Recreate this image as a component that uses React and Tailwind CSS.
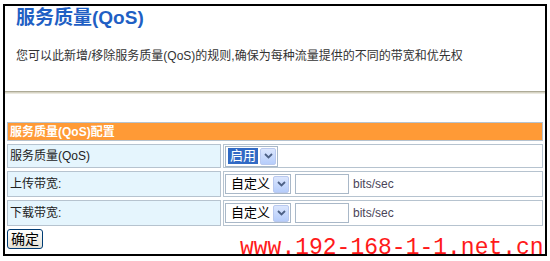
import React from "react";

const Chevron = () => (
  <svg width="9" height="6" viewBox="0 0 9 6">
    <path d="M1 1 L4.5 4.5 L8 1" fill="none" stroke="#4d6185" strokeWidth="1.8" />
  </svg>
);

const Arrow = () => (
  <span className="flex h-[17px] w-[16px] items-center justify-center rounded-[2px] border border-[#b9c9ef] bg-gradient-to-b from-[#dbe6fd] to-[#b6cdfb]">
    <Chevron />
  </span>
);

const Cell = ({ left, children }) => (
  <div className="grid h-full grid-cols-[214px_1fr] gap-x-[2px]">
    <div className="flex items-center border border-[#b6c3cf] bg-[#e5f5fd] pl-[2px] text-[12px] text-[#222]">
      {left}
    </div>
    <div className="flex items-center border border-[#b6c3cf] bg-white pl-[1px]">
      {children}
    </div>
  </div>
);

const BandwidthRow = ({ label }) => (
  <div className="h-[26px]">
    <Cell left={label}>
      <div className="flex h-[20px] w-[66px] items-center border border-[#a9b8c8] bg-white">
        <span className="ml-[5px] text-[13px] leading-[16px] text-black">自定义</span>
        <span className="ml-auto mr-[1px]">
          <Arrow />
        </span>
      </div>
      <div className="ml-[4px] h-[20px] w-[54px] border border-[#a9b8c8] bg-white" />
      <span className="ml-[4px] text-[12px] text-[#4a4458]">bits/sec</span>
    </Cell>
  </div>
);

export default function App() {
  return (
    <div className="relative h-[261px] w-[550px] overflow-hidden bg-white pl-[3px] pt-[4px] font-['Liberation_Sans','Noto_Sans_CJK_SC',sans-serif]">
      <div className="h-[252px] w-[544px] border-2 border-black">
        <h1 className="pl-[11px] text-[19px] font-bold leading-[24px] text-[#1f5fc4]">服务质量(QoS)</h1>
        <p className="mt-[18px] pl-[11px] text-[12px] leading-[16px] text-[#333]">
          您可以此新增/移除服务质量(QoS)的规则,确保为每种流量提供的不同的带宽和优先权
        </p>
        <div className="mt-[27px] h-[3px] border-t border-b border-t-[#aeab97] border-b-[#ebe9df] bg-[#d6d3c4]" />

        <div className="mt-[28px] flex flex-col gap-y-[3px] px-[2px]">
          <div className="flex h-[19px] items-center border border-[#b6c3cf] bg-[#ff9a36] pl-[2px] text-[12px] font-bold text-white">
            服务质量(QoS)配置
          </div>
          <div className="h-[24px]">
            <Cell left="服务质量(QoS)">
              <div className="flex h-[21px] w-[53px] items-center border border-[#a9b8c8] bg-white">
                <span className="ml-[2px] bg-[#316ac5] px-[2px] text-[13px] leading-[16px] text-white">启用</span>
                <span className="ml-auto mr-[1px]">
                  <Arrow />
                </span>
              </div>
            </Cell>
          </div>
          <BandwidthRow label="上传带宽:" />
          <BandwidthRow label="下载带宽:" />
        </div>

        <button className="ml-[2px] mt-[3px] flex h-[20px] w-[36px] items-center justify-center rounded-[3px] border border-[#003c74] bg-gradient-to-b from-white to-[#e3e1d6] text-[14px] leading-[16px] text-black">
          确定
        </button>
      </div>

      <div className="absolute left-[240px] top-[236px] font-['Liberation_Mono',monospace] text-[23px] leading-[24px] text-[#ff1a1a]">
        www.192-168-1-1.net.cn
      </div>
    </div>
  );
}
